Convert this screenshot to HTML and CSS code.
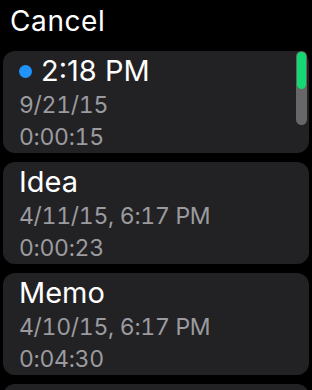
FILE: index.html
```html
<!DOCTYPE html>
<html>
<head>
<meta charset="utf-8">
<link rel="stylesheet" href="styles.css">
</head>
<body>
<div class="screen">
  <div class="header">Cancel</div>
  <div class="list">
    <div class="card">
      <div class="title"><span class="dot"></span>2:18 PM</div>
      <div class="sub">9/21/15</div>
      <div class="sub">0:00:15</div>
      <div class="scrollbar"><div class="thumb"></div></div>
    </div>
    <div class="card">
      <div class="title">Idea</div>
      <div class="sub">4/11/15, 6:17 PM</div>
      <div class="sub">0:00:23</div>
    </div>
    <div class="card">
      <div class="title">Memo</div>
      <div class="sub">4/10/15, 6:17 PM</div>
      <div class="sub">0:04:30</div>
    </div>
    <div class="card"></div>
  </div>
</div>
</body>
</html>
```

FILE: styles.css
```css
html, body {
  margin: 0;
  padding: 0;
  background: #000;
}
.screen {
  width: 312px;
  height: 390px;
  overflow: hidden;
  font-family: Inter, "Noto Sans", sans-serif;
  color: #fff;
}
.header {
  height: 51px;
  box-sizing: border-box;
  padding: 1px 0 0 10px;
  font-size: 28px;
  line-height: 40px;
  letter-spacing: 0.6px;
  color: #fff;
}
.list {
  display: flex;
  flex-direction: column;
  gap: 9px;
  padding: 0 3px;
}
.card {
  position: relative;
  flex: none;
  height: 102px;
  box-sizing: border-box;
  padding: 1px 0 0 16px;
  background: #222224;
  border-radius: 12px;
}
.title {
  display: flex;
  align-items: center;
  font-size: 29px;
  line-height: 37px;
  color: #fff;
}
.dot {
  width: 13px;
  height: 13px;
  border-radius: 50%;
  background: #2094fa;
  margin: 2px 9px 0 0;
  flex: none;
}
.sub {
  font-size: 23px;
  line-height: 32px;
  font-feature-settings: "tnum";
  letter-spacing: -0.3px;
  color: #9b9b9f;
}
.scrollbar {
  position: absolute;
  top: 0;
  right: 2px;
  width: 11px;
  height: 74px;
  border-radius: 6px;
  background: #676767;
}
.thumb {
  margin: 1px auto 0;
  width: 9px;
  height: 37px;
  border-radius: 5px;
  background: #14d872;
}
```
